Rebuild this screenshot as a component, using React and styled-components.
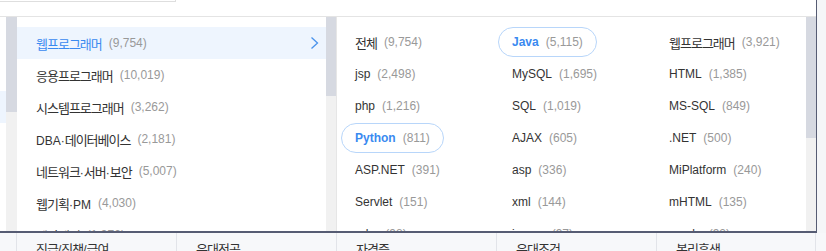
import React from "react";
import styled, { createGlobalStyle } from "styled-components";

const GlobalStyle = createGlobalStyle`
  html, body { margin: 0; padding: 0; background: #fff; overflow: hidden; }
  body {
    font-family: "Liberation Sans", "Noto Sans CJK KR", sans-serif;
    color: #333;
  }
  * { box-sizing: border-box; }
`;

const Page = styled.div`
  width: 826px;
  height: 251px;
  display: flex;
  flex-direction: column;
  overflow: hidden;
`;

const Upper = styled.div`
  display: flex;
  flex: none;
`;

const Main = styled.div`
  width: 817px;
  flex: none;
  border-right: 1px solid #565c73;
  display: flex;
  flex-direction: column;
`;

const Side = styled.div`
  flex: 1;
  background: #f5f6f8;
`;

const TopBar = styled.div`
  height: 16px;
  background: #fff;
`;

const InputEdge = styled.div`
  width: 176px;
  height: 2px;
  border-bottom: 1px solid #dedede;
  border-right: 1px solid #dedede;
`;

const Panel = styled.div`
  height: 217px;
  display: flex;
  border-top: 1px solid #e4e4e4;
  border-bottom: 2px solid #565c73;
  background: #fff;
`;

const Column = styled.div`
  display: flex;
  width: ${(p) => p.$w}px;
  flex: none;
  height: 214px;
  border-right: ${(p) => (p.$divider ? "1px solid #e6e6e6" : "none")};
`;

const Viewport = styled.div`
  flex: 1;
  min-width: 0;
  overflow: hidden;
`;

const Track = styled.div`
  width: ${(p) => p.$w}px;
  flex: none;
  background: #f1f1f1;
`;

const Thumb = styled.div`
  height: ${(p) => p.$h}px;
  background: #d6d9e1;
`;

const List = styled.ul`
  list-style: none;
  margin: 0;
  padding: 10px 0 0;
`;

const Item = styled.li`
  height: 32px;
  display: flex;
  align-items: center;
  padding: 0 7px 0 19px;
  white-space: nowrap;
  color: ${(p) => (p.$active ? "#3a8af0" : "#333")};
  background: ${(p) => (p.$active ? "#eef5fe" : "transparent")};
`;

const Name = styled.span`
  font-size: 12px;
  font-weight: ${(p) => (p.$bold ? 700 : 400)};
`;

const Hangul = styled.span`
  font-family: "Noto Sans CJK KR", sans-serif;
  font-size: 13px;
  letter-spacing: -1px;
`;

const Count = styled.span`
  margin-left: 7px;
  font-size: 12px;
  font-weight: 400;
  color: #999;
`;

const Chevron = styled.svg`
  margin-left: auto;
  flex: none;
`;

const Grid = styled.div`
  display: grid;
  grid-template-columns: repeat(3, 157px);
  grid-auto-rows: 32px;
  padding: 9px 0 0 4px;
`;

const Cell = styled.div`
  display: flex;
  align-items: center;
`;

const Chip = styled.span`
  display: inline-flex;
  align-items: center;
  height: 30px;
  padding: 0 13px;
  border: 1px solid ${(p) => (p.$active ? "#b8d6fa" : "transparent")};
  border-radius: 15px;
  white-space: nowrap;
  color: ${(p) => (p.$active ? "#3a8af0" : "#333")};
`;

const Tabs = styled.div`
  display: flex;
  padding-left: 16px;
  background: #f7f8fa;
  flex: 1;
`;

const Tab = styled.div`
  width: 160px;
  flex: none;
  border-left: 1px solid #e2e4e9;
  padding: 6px 19px;
  line-height: 20px;
  font-size: 12px;
  color: #333;
  &:last-child { border-right: 1px solid #e2e4e9; }
`;

const HANGUL_RUN = /([\u3131-\u318E\uAC00-\uD7A3]+)/;

function KoText({ text }) {
  return text.split(HANGUL_RUN).map((part, i) =>
    HANGUL_RUN.test(part) ? <Hangul key={i}>{part}</Hangul> : part
  );
}

function ScrollColumn({ width, trackWidth, thumb, divider, children }) {
  return (
    <Column $w={width} $divider={divider}>
      <Viewport>{children}</Viewport>
      <Track $w={trackWidth}>
        <Thumb $h={thumb} />
      </Track>
    </Column>
  );
}

const col0 = [
  "경영·사무", "마케팅·광고·홍보", "IT·인터넷", "디자인", "무역·유통",
  "영업·고객상담", "서비스", "연구개발·설계", "생산·제조", "교육",
];

const col1 = [
  ["웹프로그래머", "9,754"],
  ["응용프로그래머", "10,019"],
  ["시스템프로그래머", "3,262"],
  ["DBA·데이터베이스", "2,181"],
  ["네트워크·서버·보안", "5,007"],
  ["웹기획·PM", "4,030"],
  ["웹마케팅", "1,972"],
  ["컨텐츠·사이트운영", "2,418"],
];

const col2 = [
  ["전체", "9,754"], ["Java", "5,115", true], ["웹프로그래머", "3,921"],
  ["jsp", "2,498"], ["MySQL", "1,695"], ["HTML", "1,385"],
  ["php", "1,216"], ["SQL", "1,019"], ["MS-SQL", "849"],
  ["Python", "811", true], ["AJAX", "605"], [".NET", "500"],
  ["ASP.NET", "391"], ["asp", "336"], ["MiPlatform", "240"],
  ["Servlet", "151"], ["xml", "144"], ["mHTML", "135"],
  ["ruby", "98"], ["jquery", "97"], ["oracle", "92"],
];

const tabs = ["직급/직책/급여", "우대전공", "자격증", "우대조건", "복리후생"];

export default function App() {
  return (
    <>
      <GlobalStyle />
      <Page>
        <Upper>
          <Main>
            <TopBar>
              <InputEdge />
            </TopBar>
            <Panel>
              <ScrollColumn width={17} trackWidth={11} thumb={95}>
                <List>
                  {col0.map((n, i) => (
                    <Item key={n} $active={i === 2}>
                      <Name>
                        <KoText text={n} />
                      </Name>
                    </Item>
                  ))}
                </List>
              </ScrollColumn>
              <ScrollColumn width={320} trackWidth={10} thumb={79} divider>
                <List>
                  {col1.map(([n, c], i) => (
                    <Item key={n} $active={i === 0}>
                      <Name>
                        <KoText text={n} />
                      </Name>
                      <Count>({c})</Count>
                      {i === 0 && (
                        <Chevron width="9" height="14" viewBox="0 0 9 14">
                          <polyline
                            points="1.5,1.5 7.5,7 1.5,12.5"
                            fill="none"
                            stroke="#4a93ec"
                            strokeWidth="1.3"
                          />
                        </Chevron>
                      )}
                    </Item>
                  ))}
                </List>
              </ScrollColumn>
              <ScrollColumn width={479} trackWidth={10} thumb={121}>
                <Grid>
                  {col2.map(([n, c, a]) => (
                    <Cell key={n}>
                      <Chip $active={a}>
                        <Name $bold={a}>
                          <KoText text={n} />
                        </Name>
                        <Count>({c})</Count>
                      </Chip>
                    </Cell>
                  ))}
                </Grid>
              </ScrollColumn>
            </Panel>
          </Main>
          <Side />
        </Upper>
        <Tabs>
          {tabs.map((t) => (
            <Tab key={t}>
              <KoText text={t} />
            </Tab>
          ))}
        </Tabs>
      </Page>
    </>
  );
}
